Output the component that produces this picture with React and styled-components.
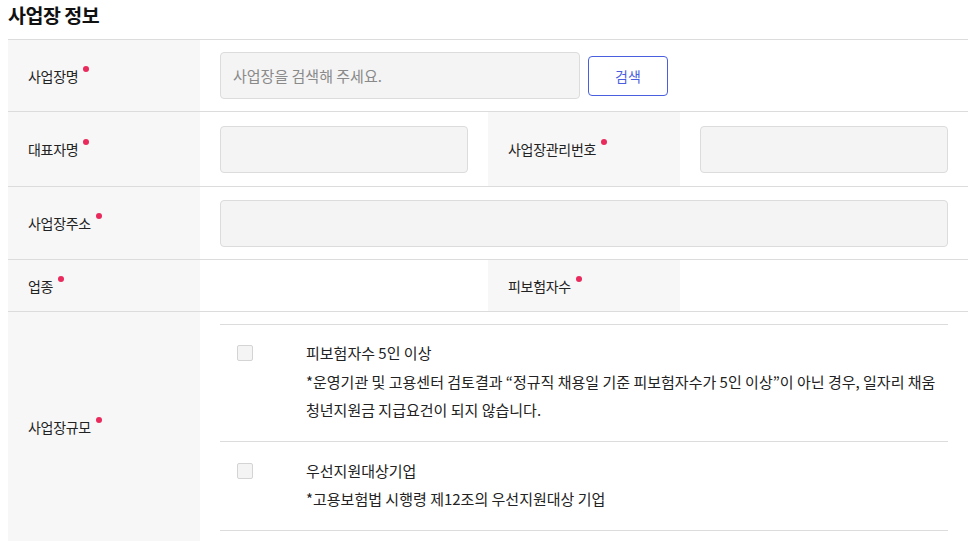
import React from 'react'
import styled, { createGlobalStyle } from 'styled-components'

const GlobalStyle = createGlobalStyle`
  body {
    margin: 0;
    background: #fff;
    font-family: "Noto Sans CJK KR", "Noto Sans", sans-serif;
    color: #222;
  }
`

const Page = styled.div`
  padding: 0 7px 0 8px;
`

const Title = styled.h2`
  margin: 0;
  height: 39px;
  line-height: 30px;
  font-size: 19.5px;
  font-weight: 700;
  letter-spacing: -0.5px;
  color: #111;
`

const Table = styled.div`
  border-top: 1px solid #dcdcdc;
`

const Row = styled.div`
  display: grid;
  grid-template-columns: ${p => (p.$split ? '192px 288px 192px 288px' : '192px 1fr')};
  min-height: ${p => p.$h || 72}px;
  border-bottom: 1px solid #dcdcdc;
`

const Label = styled.div`
  background: #f7f7f7;
  display: flex;
  align-items: center;
  padding-left: 20px;
  font-size: 14px;
  font-weight: 400;
  letter-spacing: -0.3px;
  color: #222;
`

const Req = styled.span`
  display: inline-block;
  width: 6px;
  height: 6px;
  border-radius: 50%;
  background: #ea2a5c;
  margin-left: 5px;
  transform: translateY(-7px);
`

const Cell = styled.div`
  display: flex;
  align-items: center;
  gap: 8px;
  padding: 0 20px;
`

const Input = styled.input`
  box-sizing: border-box;
  width: ${p => p.$w || '100%'};
  height: 47px;
  border: 1px solid #dcdcdc;
  border-radius: 4px;
  background: #f4f4f4;
  padding: 0 12px;
  font-family: inherit;
  font-size: 15px;
  color: #222;
  outline: none;
  &::placeholder {
    color: #8a8a8a;
  }
`

const Button = styled.button`
  box-sizing: border-box;
  width: 80px;
  height: 40px;
  border: 1px solid #4a5fe0;
  border-radius: 4px;
  background: #fff;
  color: #4a5fe0;
  font-family: inherit;
  font-size: 14px;
  cursor: pointer;
`

const ScaleCell = styled.div`
  padding: 12px 20px 10px;
`

const Options = styled.div`
  border-top: 1px solid #dcdcdc;
`

const Option = styled.div`
  display: grid;
  grid-template-columns: 86px 1fr;
  padding: ${p => p.$pad};
  border-bottom: 1px solid #dcdcdc;
`

const Check = styled.span`
  box-sizing: border-box;
  display: block;
  margin: 0 0 0 17px;
  width: 16px;
  height: 16px;
  border: 1px solid #d4d4d4;
  border-radius: 2px;
  background: #f4f4f4;
  margin-top: 6px;
`

const OptText = styled.div`
  font-size: 15px;
  line-height: 28.5px;
  letter-spacing: 0;
  word-break: keep-all;
  color: #222;
`

export default function App() {
  return (
    <>
      <GlobalStyle />
      <Page>
        <Title>사업장 정보</Title>
        <Table>
          <Row $h={71}>
            <Label>사업장명<Req /></Label>
            <Cell>
              <Input $w="360px" placeholder="사업장을 검색해 주세요." />
              <Button>검색</Button>
            </Cell>
          </Row>
          <Row $split $h={74}>
            <Label>대표자명<Req /></Label>
            <Cell><Input /></Cell>
            <Label>사업장관리번호<Req /></Label>
            <Cell><Input /></Cell>
          </Row>
          <Row $h={72}>
            <Label>사업장주소<Req /></Label>
            <Cell><Input /></Cell>
          </Row>
          <Row $split $h={51}>
            <Label>업종<Req /></Label>
            <Cell />
            <Label>피보험자수<Req /></Label>
            <Cell />
          </Row>
          <Row $h={229}>
            <Label>사업장규모<Req /></Label>
            <ScaleCell>
              <Options>
                <Option $pad="14px 0 16px">
                  <Check />
                  <OptText>
                    피보험자수 5인 이상<br />
                    *운영기관 및 고용센터 검토결과 “정규직 채용일 기준 피보험자수가 5인 이상”이 아닌 경우, 일자리 채움 청년지원금 지급요건이 되지 않습니다.
                  </OptText>
                </Option>
                <Option $pad="15px 0 16px">
                  <Check />
                  <OptText>
                    우선지원대상기업<br />
                    *고용보험법 시행령 제12조의 우선지원대상 기업
                  </OptText>
                </Option>
              </Options>
            </ScaleCell>
          </Row>
        </Table>
      </Page>
    </>
  )
}
